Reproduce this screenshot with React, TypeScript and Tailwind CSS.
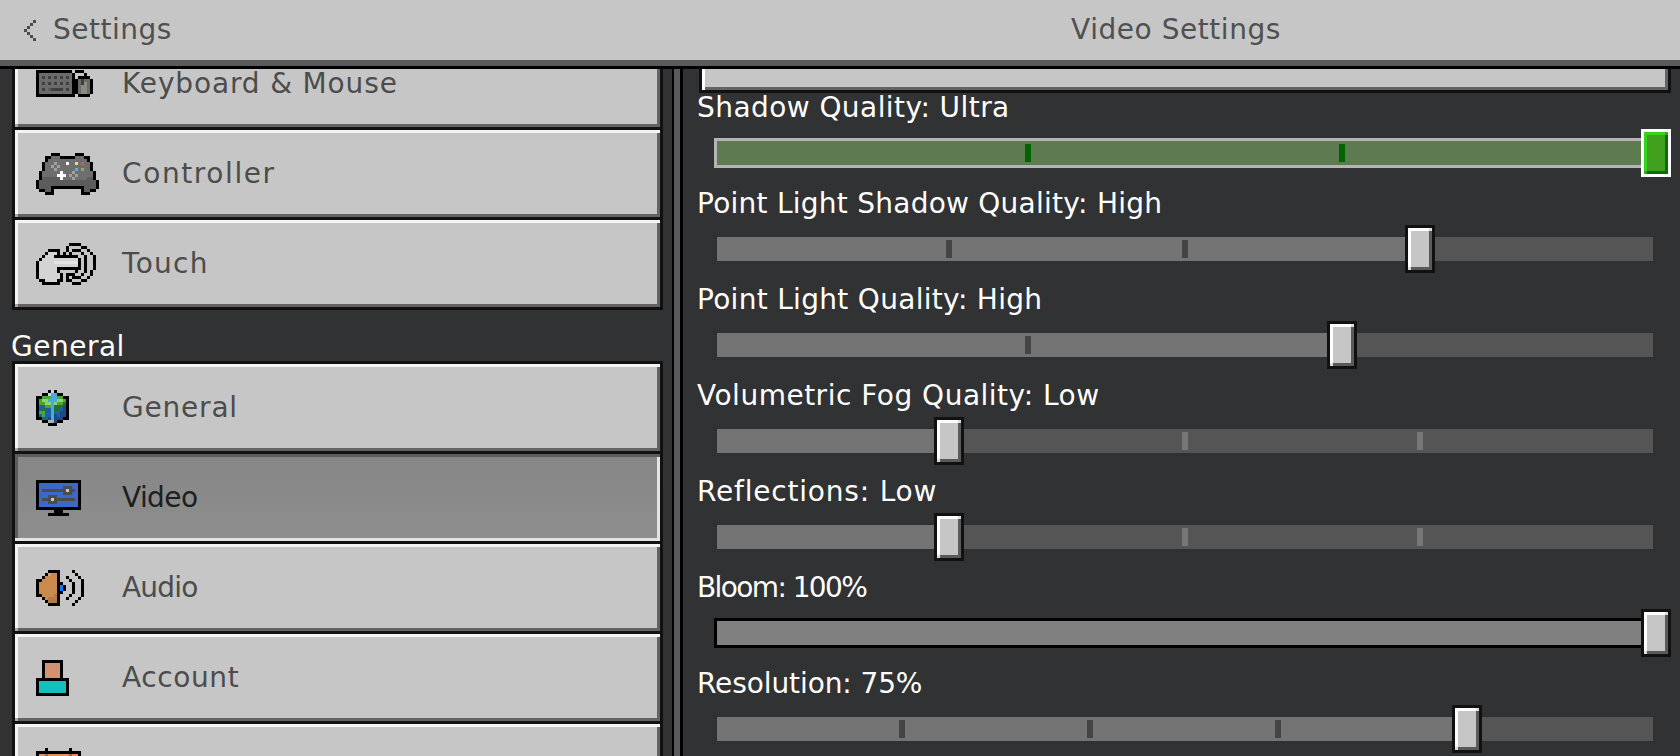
import React from "react";

type Pal = Record<string, string>;

function Pixels({ rows, pal }: { rows: string[]; pal: Pal }) {
  const w = Math.max(...rows.map((r) => r.length));
  const h = rows.length;
  return (
    <svg width={w * 3} height={h * 3} viewBox={`0 0 ${w} ${h}`} shapeRendering="crispEdges">
      {rows.flatMap((r, y) =>
        r.split("").map((c, x) => (pal[c] ? <rect key={`${x}-${y}`} x={x} y={y} width={1} height={1} fill={pal[c]} /> : null))
      )}
    </svg>
  );
}

const Keyboard = () => (
  <Pixels
    pal={{ k: "#000", g: "#6b6b6b", d: "#3f3f3f", m: "#8a8a80", n: "#5a5a5a" }}
    rows={[
      "kkkkkkkkkkkk.kkk...",
      "kgggggggggggk...k..",
      "kgdgdgdgdgdgk.kkkk.",
      "kgggggggggggkkgdggk",
      "kgdgdgdgdgdgkkgdmgk",
      "kgggggggggggkkgmmgk",
      "kgdgnddddgdgkkgmmgk",
      "kgggggggggggkkgmmgk",
      "kkkkkkkkkkkkk.kkkk.",
    ]}
  />
);

const Controller = () => (
  <Pixels
    pal={{ k: "#000", g: "#6e6e6e", d: "#5c5c5c", l: "#a0a0a0", W: "#fff", Y: "#f0dc6e", R: "#e0506a", B: "#50b0e0", G: "#80b060" }}
    rows={[
      ".....kkk.....kkk.....",
      "...kkgggkkkkkgggkk...",
      "...kgggggggggggggk...",
      "..kggglgggWggYgRggk..",
      "..kgglglggggggggggk..",
      "..kggglggggggBgGggk..",
      ".kggggggWggglggggggk.",
      ".kgggggWWWglglgggggk.",
      ".kddddddWggglggggddk.",
      "kdddddddddddddddddddk",
      "kdddddddddddddddddddk",
      "kddddkkkkkkkkkkkddddk",
      ".kkddk.........kddkk.",
      "...kkk.........kkk...",
    ]}
  />
);

const Touch = () => (
  <Pixels
    pal={{ k: "#000", W: "#d4d4d4", L: "#e4e4e4" }}
    rows={[
      "...........kkkk.....",
      "..........k....kk...",
      "....kkkk..k.kkk..k..",
      "...kWWWk.k.k...k..k.",
      "..kWWWkkkkkkkk..k..k",
      ".kWWWWWWWWWWWWk.k..k",
      "kWWWWWLLLLLLLLk.k..k",
      "kWWWWWWWWWWWWWk.k..k",
      "kWWWWWWkkkkkkkk.k..k",
      "kWWWWWWk.....k..k.k.",
      "kWWWWWWWk.kkk..k..k.",
      "kWWWWWWWk.k.kkk..k..",
      ".kkWWWWkk.kk...kk...",
      "..kkkkkk....kkk.....",
    ]}
  />
);

const Globe = () => (
  <Pixels
    pal={{ k: "#000", W: "#c8dce8", L: "#8fd46a", G: "#46a838", E: "#24702f", B: "#1f5fa8", D: "#174a87", C: "#4aa8e8", A: "#b0b0b0" }}
    rows={[
      "....kWk....",
      "..kkWCCkk..",
      "kkGGGCCGGkk",
      "kGLLCCCLLGk",
      "kGGLLCLGGEk",
      "kBBGGCEEEDk",
      "kBEBBCEEBDk",
      "kGGBBCBBDDk",
      "kBGBBCDBDDk",
      "kkBBDCDDDkk",
      "..kkAADkk..",
      "....kkk....",
    ]}
  />
);

const Monitor = () => (
  <Pixels
    pal={{ k: "#000", B: "#3a69c9", d: "#4c4c4c", l: "#c8c8c8" }}
    rows={[
      "kkkkkkkkkkkkkkk",
      "kBBBBBBBBBBBBBk",
      "kBBBBBBBBdddBBk",
      "kBddddddddlddBk",
      "kBBBBBBBBdddBBk",
      "kBBBdddBBBBBBBk",
      "kBdddldddddddBk",
      "kBBBdddBBBBBBBk",
      "kBBBBBBBBBBBBBk",
      "kkkkkkkkkkkkkkk",
      "......kkk......",
      "....kkkkkkk....",
    ]}
  />
);

const Speaker = () => (
  <Pixels
    pal={{ k: "#000", O: "#c98a4e", P: "#b87a45", L: "#d8a070", B: "#0a7aff" }}
    rows={[
      "....kkkk....k...",
      "...kLOOk.....k..",
      "..kOOOOk..k...k.",
      "kkOOOOOk...k...k",
      "kOOOOOOkk...k..k",
      "kOOOOOOkBk..k..k",
      "kOOOOOOkBk..k..k",
      "kOOOOOOkk...k..k",
      "kkOOOOPk...k...k",
      "..kOPPPk..k...k.",
      "...kPPPk.....k..",
      "....kkkk....k...",
    ]}
  />
);

const Person = () => (
  <Pixels
    pal={{ k: "#000", S: "#d09470", T: "#14c0bc" }}
    rows={[
      "..kkkkkkk..",
      "..kSSSSSk..",
      "..kSSSSSk..",
      "..kSSSSSk..",
      "..kSSSSSk..",
      "..kSSSSSk..",
      "kkkkkkkkkkk",
      "kTTTTTTTTTk",
      "kTTTTTTTTTk",
      "kTTTTTTTTTk",
      "kTTTTTTTTTk",
      "kkkkkkkkkkk",
    ]}
  />
);

const Storage = () => (
  <Pixels
    pal={{ k: "#000", O: "#e09058", D: "#a06a40" }}
    rows={[
      "...k.......k...",
      "kkkkkkkkkkkkkkk",
      "kOODOOOOOOODOOk",
      "kOOOOOOOOOOOOOk",
      "kOOOOOOOOOOOOOk",
      "kOOOOOOOOOOOOOk",
      "kOOOOOOOOOOOOOk",
      "kOOOOOOOOOOOOOk",
      "kOOOOOOOOOOOOOk",
      "kOOOOOOOOOOOOOk",
      "kOOOOOOOOOOOOOk",
      "kOOOOOOOOOOOOOk",
      "kkkkkkkkkkkkkkk",
    ]}
  />
);

const Chevron = () => (
  <Pixels pal={{ k: "#4c4c4c" }} rows={["...k", "..k.", ".k..", "k...", ".k..", "..k.", "...k"]} />
);

const font = "[font-family:'DejaVu_Sans',sans-serif] text-[28px] whitespace-nowrap";

function NavButton({
  icon,
  label,
  active,
  tracking,
}: {
  icon: React.ReactNode;
  label?: string;
  active?: boolean;
  tracking?: string;
}) {
  return (
    <div
      className={
        "relative h-[87px] flex items-center pl-[21px] shrink-0 " +
        (active
          ? "bg-gradient-to-b from-[#868686] to-[#8e8e8e] shadow-[inset_3px_3px_0_#5c5c5c,inset_-3px_-3px_0_#e4e4e4]"
          : "bg-[#c6c6c6] shadow-[inset_3px_3px_0_#f4f4f4,inset_-3px_-3px_0_#636363]")
      }
    >
      <div className="w-[86px] shrink-0 flex">{icon}</div>
      {label && (
        <span className={font + " leading-[28px] " + (tracking ?? "") + " " + (active ? "text-[#1e1e1e]" : "text-[#4c4c4c]")}>{label}</span>
      )}
      <span className={"absolute left-0 bottom-0 w-[3px] h-[3px] " + (active ? "bg-[#e4e4e4]" : "bg-[#a8a8a8]")} />
    </div>
  );
}

type SliderProps = {
  label: string;
  thumb: number;
  ticks?: number[];
  variant?: "normal" | "focus" | "black";
  tracking?: string;
};

const TRACK_LEFT = 717;

function Thumb({ left, green }: { left: number; green?: boolean }) {
  return (
    <div
      className={
        "absolute top-0 w-[30px] h-[48px] border-[3px] " +
        (green
          ? "border-white bg-[#43a01f] shadow-[inset_3px_3px_0_#35d21e,inset_-3px_-3px_0_#037003]"
          : "border-[#111111] bg-[#c6c6c6] shadow-[inset_3px_3px_0_#ffffff,inset_-3px_-3px_0_#5a5a5a]")
      }
      style={{ left: left - 699 }}
    >
      <span className={"absolute right-0 top-0 w-[3px] h-[3px] " + (green ? "bg-[#3aa81f]" : "bg-[#dddddd]")} />
      <span className={"absolute left-0 bottom-0 w-[3px] h-[3px] " + (green ? "bg-[#3aa81f]" : "bg-[#dddddd]")} />
    </div>
  );
}

function Slider({ label, thumb, ticks = [], variant = "normal", tracking }: SliderProps) {
  const filled = thumb + 15 - TRACK_LEFT;
  return (
    <div className="shrink-0 h-[96px]">
      <div className={font + " h-[36px] leading-[30px] -ml-[2px] text-white " + (tracking ?? "")}>{label}</div>
      <div className="relative h-[48px] flex items-center pl-[15px]">
        {variant === "normal" ? (
          <div className="relative ml-[3px] w-[936px] h-[24px] bg-[#555555] shadow-[0_0_0_3px_#303132]">
            <div className="absolute left-0 top-0 h-full bg-[#747474]" style={{ width: filled }} />
            {ticks.map((t) => (
              <div
                key={t}
                className={"absolute top-[3px] w-[6px] h-[18px] " + (t < thumb ? "bg-[#444444]" : "bg-[#777777]")}
                style={{ left: t - TRACK_LEFT }}
              />
            ))}
          </div>
        ) : (
          <div
            className={
              "relative w-[942px] h-[30px] border-[3px] " +
              (variant === "focus" ? "border-[#b5b5b5] bg-[#5e7a50]" : "border-black bg-[#808080]")
            }
          >
            {ticks.map((t) => (
              <div key={t} className="absolute top-[3px] w-[6px] h-[18px] bg-[#006400]" style={{ left: t - TRACK_LEFT }} />
            ))}
          </div>
        )}
        <Thumb left={thumb} green={variant === "focus"} />
      </div>
    </div>
  );
}

export default function App() {
  return (
    <div className="w-[1680px] h-[756px] overflow-hidden bg-[#313233] flex flex-col">
      <header className="shrink-0 h-[60px] bg-[#c6c6c6] grid grid-cols-[672px_1fr] items-center text-[#505050]">
        <div className="flex items-center pl-[24px] gap-[17px]">
          <Chevron />
          <span className={font + " leading-[36px] tracking-[0.5px]"}>Settings</span>
        </div>
        <div className={font + " leading-[36px] text-center tracking-[0.55px]"}>Video Settings</div>
      </header>
      <div className="shrink-0 h-[6px] bg-[#5a5a5c]" />
      <div className="shrink-0 h-[3px] bg-black" />
      <div className="flex-1 min-h-0 flex">
        <aside className="w-[672px] shrink-0 overflow-hidden">
          <div className="-mt-[32px] ml-[12px] w-[651px] flex flex-col">
            <div className="border-[3px] border-[#111111] bg-[#111111] flex flex-col gap-[3px]">
              <NavButton icon={<Keyboard />} label="Keyboard & Mouse" tracking="tracking-[0.85px]" />
              <NavButton icon={<Controller />} label="Controller" tracking="tracking-[1.6px]" />
              <NavButton icon={<Touch />} label="Touch" tracking="tracking-[1.3px]" />
            </div>
            <div className={font + " leading-[36px] -ml-[1px] h-[51px] pt-[19px] text-white tracking-[0.5px]"}>General</div>
            <div className="border-[3px] border-[#111111] bg-[#111111] flex flex-col gap-[3px]">
              <NavButton icon={<Globe />} label="General" tracking="tracking-[0.8px]" />
              <NavButton icon={<Monitor />} label="Video" active tracking="-tracking-[0.6px]" />
              <NavButton icon={<Speaker />} label="Audio" tracking="-tracking-[0.8px]" />
              <NavButton icon={<Person />} label="Account" tracking="tracking-[0.6px]" />
              <NavButton icon={<Storage />} />
            </div>
          </div>
        </aside>
        <div className="w-[2px] shrink-0 bg-black" />
        <div className="w-[6px] shrink-0 bg-[#5a5a5c]" />
        <div className="w-[3px] shrink-0 bg-black" />
        <main className="flex-1 min-w-0 overflow-hidden pl-[16px] pr-[9px] flex flex-col">
          <div className="shrink-0 h-[24px] bg-[#111111] pl-[3px] pr-[3px] pb-[3px]">
            <div className="h-full bg-[#c6c6c6] shadow-[inset_3px_0_0_#ffffff,inset_-3px_-3px_0_#636363]" />
          </div>
          <Slider label="Shadow Quality: Ultra" thumb={1641} ticks={[1025, 1339]} variant="focus" tracking="tracking-[0.43px]" />
          <Slider label="Point Light Shadow Quality: High" thumb={1405} ticks={[946, 1182]} tracking="tracking-[0.25px]" />
          <Slider label="Point Light Quality: High" thumb={1327} ticks={[1025]} tracking="tracking-[0.3px]" />
          <Slider label="Volumetric Fog Quality: Low" thumb={934} ticks={[1182, 1417]} tracking="tracking-[0.5px]" />
          <Slider label="Reflections: Low" thumb={934} ticks={[1182, 1417]} tracking="tracking-[0.8px]" />
          <Slider label="Bloom: 100%" thumb={1641} variant="black" tracking="-tracking-[1.6px]" />
          <Slider label="Resolution: 75%" thumb={1452} ticks={[899, 1087, 1275]} tracking="-tracking-[0.1px]" />
        </main>
      </div>
    </div>
  );
}
